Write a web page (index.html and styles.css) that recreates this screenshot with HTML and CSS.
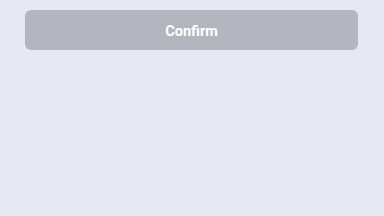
FILE: index.html
```html
<!DOCTYPE html>
<html>
<head>
    <title>Confirm</title>
    <link rel="stylesheet" href="styles.css">
</head>
<body>
    <div class="actions">
        <button class="confirm-btn" disabled>Confirm</button>
    </div>
</body>
</html>
```

FILE: styles.css
```css
body {
    margin: 0;
    padding: 0;
    background-color: #e6e9f4;
    font-family: Roboto, "Liberation Sans", sans-serif;
    height: 216px;
}

.actions {
    display: flex;
    padding: 10px 26px 0 25px;
}

.confirm-btn {
    flex: 1;
    height: 40px;
    padding: 2px 0 0 0;
    border: none;
    border-radius: 6px;
    background-color: #b4b6bf;
    color: #fff;
    font-family: Roboto, "Liberation Sans", sans-serif;
    font-weight: bold;
    font-size: 14.5px;
}
```
